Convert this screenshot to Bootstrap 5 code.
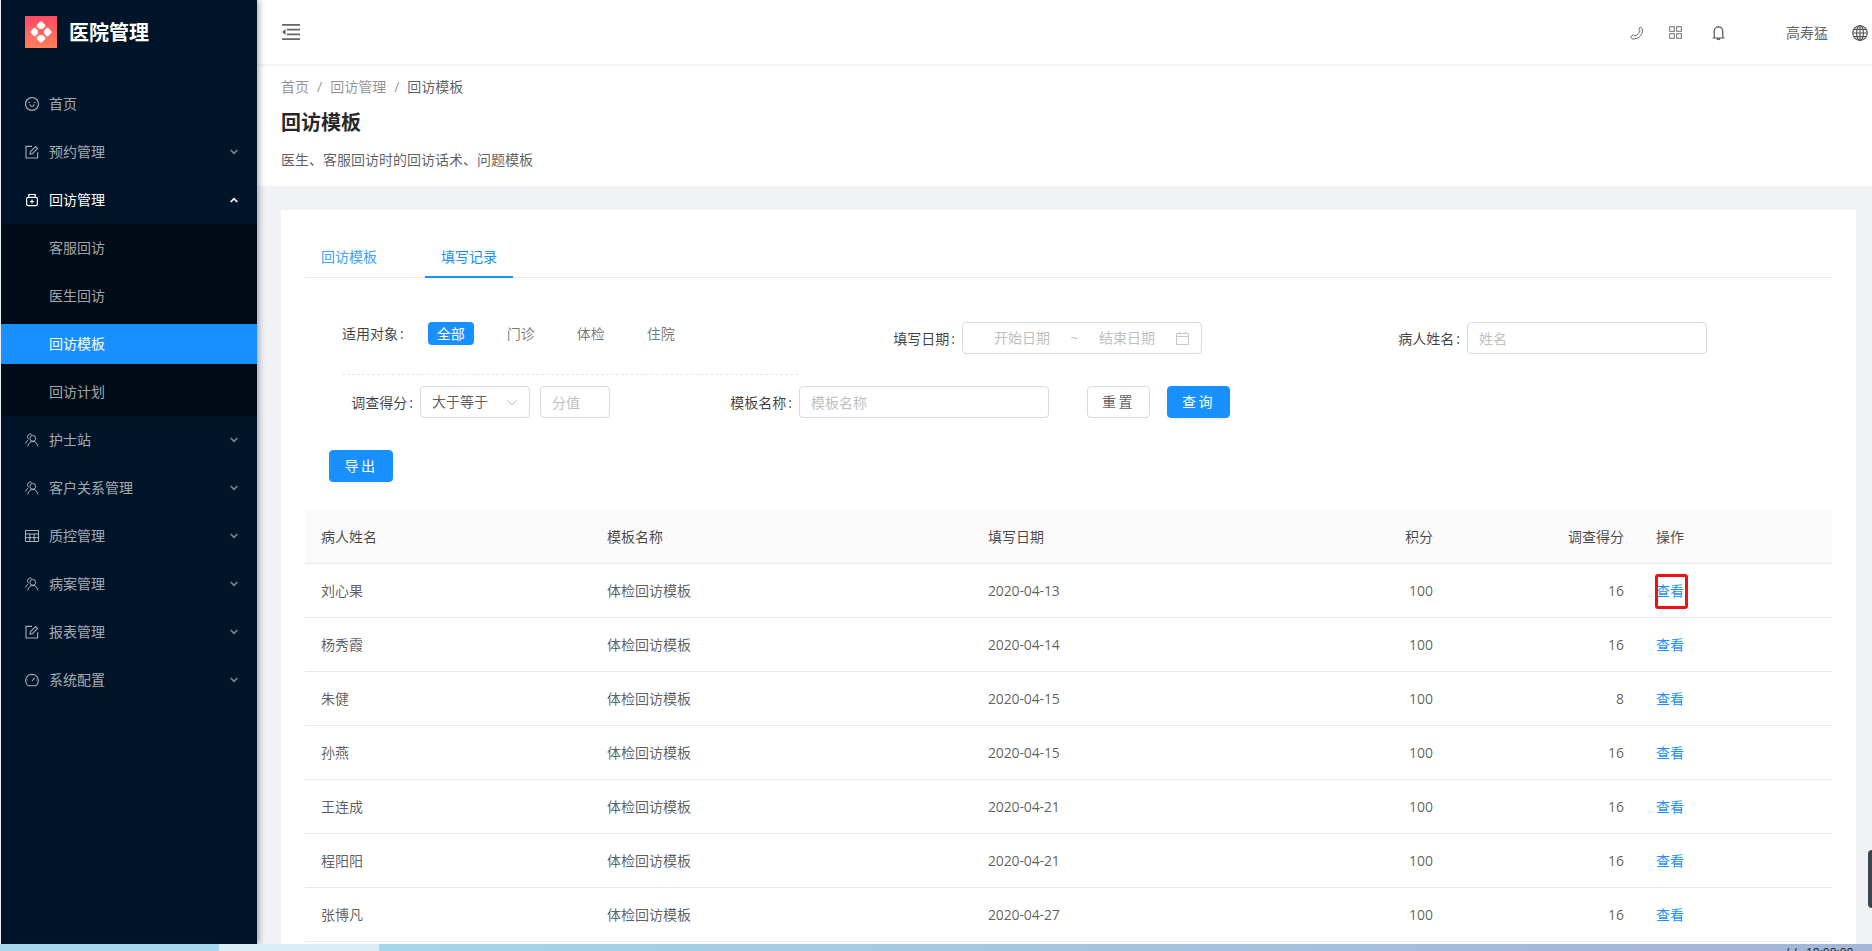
<!DOCTYPE html>
<html lang="zh-CN">
<head>
<meta charset="utf-8">
<title>回访模板</title>
<link href="https://cdn.jsdelivr.net/npm/bootstrap@5.3.0/dist/css/bootstrap.min.css" rel="stylesheet">
<style>
html,body{height:951px;overflow:hidden;}
body{font-family:"Open Sans","Noto Sans CJK SC",sans-serif;font-size:14px;line-height:21px;background:#f0f2f5;color:rgba(0,0,0,.65);position:relative;}
.shell{height:944px;overflow:hidden;}
.side{width:257px;flex:none;background:#001529;border-left:1px solid #eef1f4;box-shadow:2px 0 6px rgba(0,21,41,.35);z-index:3;color:rgba(255,255,255,.65);}
.brand{height:64px;padding-left:24px;gap:12px;margin-bottom:16px;}
.brand-name{font-size:20px;font-weight:600;color:#fff;line-height:28px;padding-top:2px;}
.brand svg{display:block;}
.mitem{height:48px;padding:0 19px 0 24px;color:rgba(255,255,255,.65);}
.mitem .mi{width:14px;height:14px;margin-right:10px;flex:none;}
.mitem .chev{margin-left:auto;}
.mtext{padding-bottom:2px;}
.mitem.open{color:#fff;}
.subm{background:#000c17;}
.sitem{height:40px;margin:4px 0;padding:0 0 2px 48px;color:rgba(255,255,255,.65);}
.sitem.on{background:#1890ff;color:#fff;}
.mainc{min-width:0;}
.topb{height:64px;flex:none;padding:0 4px 0 25px;background:#fff;box-shadow:0 1px 3px rgba(0,21,41,.09);z-index:2;position:relative;}
.ti{color:#666;position:absolute;}
.ti.dk{color:#555;}
.uname{position:absolute;left:1529px;top:22px;color:#666;}
.phead{height:122px;background:#fff;flex:none;margin-top:0;padding:12px 24px 0;}
.crumb{margin:0;line-height:22px;--bs-breadcrumb-margin-bottom:0;--bs-breadcrumb-divider-color:rgba(0,0,0,.45);--bs-breadcrumb-item-active-color:rgba(0,0,0,.65);}
.crumb .breadcrumb-item{color:rgba(0,0,0,.45);}
.crumb .breadcrumb-item.active{color:rgba(0,0,0,.65);}
.ptitle{font-size:20px;font-weight:600;line-height:28px;color:rgba(0,0,0,.85);margin:11px 0 12px;}
.pdesc{line-height:22px;margin:0;color:rgba(0,0,0,.65);}
.pagebody{padding:24px 16px 0 24px;flex:1;min-height:0;}
.panel{background:#fff;padding:24px;height:100%;overflow:hidden;}
.tabsbar{height:44px;border-bottom:1px solid #e8e8e8;gap:32px;}
.tabx{padding:12px 16px 0;width:88px;height:44px;line-height:22px;color:#40a0ff;text-decoration:none;flex:none;}
.tabx.on{color:#1890ff;border-bottom:2px solid #1890ff;}
.frow1{margin-top:44px;padding-left:37px;height:32px;}
.ftype{width:456px;height:24px;line-height:24px;color:rgba(0,0,0,.75);}
.pill{width:46px;height:23px;line-height:23px;text-align:center;border-radius:4px;color:rgba(0,0,0,.55);margin-right:24px;}
.pill.first{margin-left:24px;background:#1890ff;color:#fff;}
.lab{color:rgba(0,0,0,.75);white-space:nowrap;margin-right:7px;}
.colon{margin-left:2px;}
.fld{justify-content:flex-end;}
.w404{width:404px;}
.w505{width:505px;}
.w305{width:305px;}
.w439{width:439px;}
.box{height:32px;border:1px solid #d9d9d9;border-radius:4px;padding:0 11px;font-size:14px;line-height:30px;background:#fff;color:rgba(0,0,0,.65);box-shadow:none;}
.box::placeholder{color:#bfbfbf;}
.holder{color:#bfbfbf;}
.datestart{margin-left:20px;}
.cal{margin-left:21px;margin-right:1px;flex:none;}
.w240{width:240px;}
.w70{width:70px;}
.w250{width:250px;}
.selbox{width:110px;margin-right:10px;}
.dashln{margin:20px 0 11px 37px;width:456px;border-top:1px dashed #e8e8e8;}
.btnpair{margin-left:38px;gap:17px;}
.btnx{height:32px;width:63px;padding:0;font-size:14px;line-height:30px;border-radius:4px;letter-spacing:2.5px;}
.btn-primary.btnx{--bs-btn-bg:#1890ff;--bs-btn-border-color:#1890ff;--bs-btn-color:#fff;box-shadow:0 2px 0 rgba(0,0,0,.045);}
.btn-light.btnx{--bs-btn-bg:#fff;--bs-btn-border-color:#d9d9d9;--bs-btn-color:rgba(0,0,0,.65);}
.btn-exp{width:64px;margin:32px 0 28px 24px;display:block;}
.tb{width:1527px;table-layout:fixed;margin:0;--bs-table-color:rgba(0,0,0,.65);--bs-table-border-color:#e8e8e8;}
.tb th{background:#fafafa;font-weight:400;color:rgba(0,0,0,.72);padding:16px;}
.tb td{padding:16px;}
.tb th:first-child{border-top-left-radius:4px;}
.tb th:last-child{border-top-right-radius:4px;}
.c1{width:286px;}.c2{width:381px;}.c3{width:258px;}.c4{width:219px;}.c5{width:191px;}.c6{width:192px;}
.dt{letter-spacing:-.14px;}
.viewlink{color:#1890ff;text-decoration:none;}
.redmark{position:absolute;left:-1px;right:-4px;top:-6px;bottom:-8px;border:3px solid #f01212;border-radius:3px;}
.strip{height:7px;overflow:hidden;position:relative;}
.st1{width:219px;background:#a6d9ed;}
.st2{width:160px;background:#d9eef7;}
.st3{background:linear-gradient(90deg,#a3d7ea,#a4b7d9 85%);}
.clock{position:absolute;left:1785px;top:-1px;font-size:12px;line-height:20px;color:#222;white-space:nowrap;}
.clock b{font-weight:400;margin-left:9px;}
.edgehandle{position:absolute;right:0;top:850px;width:4px;height:58px;background:#3c4450;border-radius:4px 0 0 4px;z-index:4;}
.p1{left:1373px;top:26px;}.p2{left:1412px;top:26px;}.p3{left:1455px;top:25px;}.p4{left:1595px;top:25px;}
</style>
</head>
<body>
<div class="d-flex shell">
  <aside class="side d-flex flex-column">
    <div class="brand d-flex align-items-center">
      <svg width="32" height="32" viewBox="0 0 32 32"><defs><linearGradient id="lg" x1="0" y1="0" x2="0" y2="1"><stop offset="0" stop-color="#ff4a64"/><stop offset="1" stop-color="#ff7f5c"/></linearGradient></defs><rect width="32" height="32" fill="url(#lg)"/><g fill="#fff" stroke="#fff" stroke-width=".8" stroke-linejoin="round"><path d="M16 5.5 19.8 8.8V10.4L18 12.4H14L12.2 10.4V8.8Z"/><path d="M16 5.5 19.8 8.8V10.4L18 12.4H14L12.2 10.4V8.8Z" transform="rotate(90 16 16)"/><path d="M16 5.5 19.8 8.8V10.4L18 12.4H14L12.2 10.4V8.8Z" transform="rotate(180 16 16)"/><path d="M16 5.5 19.8 8.8V10.4L18 12.4H14L12.2 10.4V8.8Z" transform="rotate(270 16 16)"/></g></svg>
      <span class="brand-name">医院管理</span>
    </div>
    <nav class="d-flex flex-column">
      <div class="mitem d-flex align-items-center"><svg class="mi" viewBox="64 64 896 896" fill="currentColor"><path d="M288 421a48 48 0 1 0 96 0 48 48 0 1 0-96 0zm352 0a48 48 0 1 0 96 0 48 48 0 1 0-96 0zM512 64C264.6 64 64 264.6 64 512s200.6 448 448 448 448-200.6 448-448S759.4 64 512 64zm263 711c-34.2 34.2-74 61-118.3 79.8C611 874.2 562.3 884 512 884c-50.3 0-99-9.8-144.8-29.2A370.4 370.4 0 0 1 248.9 775c-34.2-34.2-61-74-79.8-118.3C149.8 611 140 562.3 140 512s9.8-99 29.2-144.8A370.4 370.4 0 0 1 249 248.9c34.2-34.2 74-61 118.3-79.8C413 149.8 461.7 140 512 140c50.3 0 99 9.8 144.8 29.2A370.4 370.4 0 0 1 775.1 249c34.2 34.2 61 74 79.8 118.3C874.2 413 884 461.7 884 512s-9.8 99-29.2 144.8A368.89 368.89 0 0 1 775 775zM664 533h-48.1c-4.2 0-7.8 3.2-8.1 7.4C604 589.9 562.5 629 512 629s-92.1-39.1-95.8-88.6c-.3-4.2-3.9-7.4-8.1-7.4H360a8 8 0 0 0-8 8.4c4.4 84.3 74.5 151.6 160 151.6s155.6-67.3 160-151.6a8 8 0 0 0-8-8.4z"/></svg><span class="mtext">首页</span></div>
      <div class="mitem d-flex align-items-center"><svg class="mi" viewBox="0 0 14 14" fill="none" stroke="currentColor" stroke-width="1.1"><path d="M12.6 7.2V13H1V1.4H7"/><path d="M5 9.1 5.5 6.6 10.6 1.5 12.6 3.4 7.5 8.6Z"/></svg><span class="mtext">预约管理</span><svg class="chev" width="8" height="6" viewBox="0 0 8 6" fill="none" stroke="currentColor" stroke-width="1.7" opacity=".75"><path d="M.7 1 4 4.4 7.3 1"/></svg></div>
      <div class="mitem open d-flex align-items-center"><svg class="mi" viewBox="0 0 14 14" fill="none" stroke="currentColor" stroke-width="1.2"><rect x="1.6" y="4.4" width="10.8" height="8.2" rx="1.6"/><path d="M3.8 4.4V1.5H10.2V4.4"/><path d="M7 6.5V10.5M5 8.5H9"/></svg><span class="mtext">回访管理</span><svg class="chev" width="8" height="6" viewBox="0 0 8 6" fill="none" stroke="currentColor" stroke-width="1.7"><path d="M.7 5 4 1.6 7.3 5"/></svg></div>
      <div class="subm d-flex flex-column">
        <div class="sitem d-flex align-items-center">客服回访</div>
        <div class="sitem d-flex align-items-center">医生回访</div>
        <div class="sitem on d-flex align-items-center">回访模板</div>
        <div class="sitem d-flex align-items-center">回访计划</div>
      </div>
      <div class="mitem d-flex align-items-center"><svg class="mi" viewBox="0 0 14 14" fill="none" stroke="currentColor" stroke-width="1"><circle cx="7.8" cy="5.4" r="2.9"/><path d="M2.8 13.3C3.3 10.2 5.3 8.4 7.8 8.4s4.5 1.8 5 4.9"/><path d="M6.6 1.3A3 3 0 0 0 3 5.8M3.4 6.8C2 7.6 1 9 .7 10.6"/></svg><span class="mtext">护士站</span><svg class="chev" width="8" height="6" viewBox="0 0 8 6" fill="none" stroke="currentColor" stroke-width="1.7" opacity=".75"><path d="M.7 1 4 4.4 7.3 1"/></svg></div>
      <div class="mitem d-flex align-items-center"><svg class="mi" viewBox="0 0 14 14" fill="none" stroke="currentColor" stroke-width="1"><circle cx="7.8" cy="5.4" r="2.9"/><path d="M2.8 13.3C3.3 10.2 5.3 8.4 7.8 8.4s4.5 1.8 5 4.9"/><path d="M6.6 1.3A3 3 0 0 0 3 5.8M3.4 6.8C2 7.6 1 9 .7 10.6"/></svg><span class="mtext">客户关系管理</span><svg class="chev" width="8" height="6" viewBox="0 0 8 6" fill="none" stroke="currentColor" stroke-width="1.7" opacity=".75"><path d="M.7 1 4 4.4 7.3 1"/></svg></div>
      <div class="mitem d-flex align-items-center"><svg class="mi" viewBox="0 0 14 14" fill="none" stroke="currentColor" stroke-width="1"><path d="M.5 1.5H13.5V12.5H.5ZM.5 5H13.5M.5 8.7H13.5M4.8 5V12.5M9.2 5V12.5"/></svg><span class="mtext">质控管理</span><svg class="chev" width="8" height="6" viewBox="0 0 8 6" fill="none" stroke="currentColor" stroke-width="1.7" opacity=".75"><path d="M.7 1 4 4.4 7.3 1"/></svg></div>
      <div class="mitem d-flex align-items-center"><svg class="mi" viewBox="0 0 14 14" fill="none" stroke="currentColor" stroke-width="1"><circle cx="7.8" cy="5.4" r="2.9"/><path d="M2.8 13.3C3.3 10.2 5.3 8.4 7.8 8.4s4.5 1.8 5 4.9"/><path d="M6.6 1.3A3 3 0 0 0 3 5.8M3.4 6.8C2 7.6 1 9 .7 10.6"/></svg><span class="mtext">病案管理</span><svg class="chev" width="8" height="6" viewBox="0 0 8 6" fill="none" stroke="currentColor" stroke-width="1.7" opacity=".75"><path d="M.7 1 4 4.4 7.3 1"/></svg></div>
      <div class="mitem d-flex align-items-center"><svg class="mi" viewBox="0 0 14 14" fill="none" stroke="currentColor" stroke-width="1.1"><path d="M12.6 7.2V13H1V1.4H7"/><path d="M5 9.1 5.5 6.6 10.6 1.5 12.6 3.4 7.5 8.6Z"/></svg><span class="mtext">报表管理</span><svg class="chev" width="8" height="6" viewBox="0 0 8 6" fill="none" stroke="currentColor" stroke-width="1.7" opacity=".75"><path d="M.7 1 4 4.4 7.3 1"/></svg></div>
      <div class="mitem d-flex align-items-center"><svg class="mi" viewBox="0 0 14 14" fill="none" stroke="currentColor" stroke-width="1.1"><path d="M3.2 12.8A6.4 6.4 0 1 1 10.8 12.8Z"/><path d="M7 8 9.6 4.8M2.8 7H1.8M12.2 7H11.2M7 2.6V1.6"/></svg><span class="mtext">系统配置</span><svg class="chev" width="8" height="6" viewBox="0 0 8 6" fill="none" stroke="currentColor" stroke-width="1.7" opacity=".75"><path d="M.7 1 4 4.4 7.3 1"/></svg></div>
    </nav>
  </aside>
  <main class="mainc flex-grow-1 d-flex flex-column">
    <header class="topb d-flex align-items-center">
      <svg width="18" height="16" viewBox="0 0 18 16" fill="#666"><path d="M0 0H18V1.8H0ZM0 14.2H18V16H0ZM5 4.8H18V6.5H5ZM5 9.5H18V11.2H5ZM0 8 3.6 5V11Z"/></svg>
      <svg class="ti p1" width="14" height="14" viewBox="0 0 14 14" fill="none" stroke="currentColor" stroke-width="1"><path d="M10.2 1 12.6 3C13 9 8.8 13.2 2.6 13 1.2 12.6.7 11 1.2 10.2L3.5 8.7 5 10C7.5 9 9.3 7 10 4.8L8.8 3.4Z"/></svg>
      <svg class="ti p2" width="13" height="13" viewBox="0 0 13 13" fill="none" stroke="#888" stroke-width="1.2"><rect x=".6" y=".6" width="4.8" height="4.8" rx=".4"/><rect x="7.6" y=".6" width="4.8" height="4.8" rx=".4"/><rect x=".6" y="7.6" width="4.8" height="4.8" rx=".4"/><rect x="7.6" y="7.6" width="4.8" height="4.8" rx=".4"/></svg>
      <svg class="ti dk p3" width="13" height="16" viewBox="0 0 13 16" fill="none" stroke="currentColor" stroke-width="1.2"><path d="M.6 13H12.4M2.2 13V6.2A4.3 4.3 0 0 1 10.8 6.2V13M6.5 1V2M5 13.5A1.6 1.6 0 0 0 8 13.5"/></svg>
      <span class="uname">高寿猛</span>
      <svg class="ti dk p4" width="16" height="16" viewBox="0 0 16 16" fill="none" stroke="currentColor" stroke-width="1.15"><circle cx="8" cy="8" r="7.3"/><ellipse cx="8" cy="8" rx="3.4" ry="7.3"/><path d="M8 .6V15.4M.6 8H15.4M1.6 4.4H14.4M1.6 11.6H14.4"/></svg>
    </header>
    <section class="phead">
      <ol class="breadcrumb crumb"><li class="breadcrumb-item">首页</li><li class="breadcrumb-item">回访管理</li><li class="breadcrumb-item active">回访模板</li></ol>
      <h1 class="ptitle">回访模板</h1>
      <p class="pdesc">医生、客服回访时的回访话术、问题模板</p>
    </section>
    <section class="pagebody">
      <div class="panel">
        <div class="tabsbar d-flex"><a class="tabx" href="#">回访模板</a><a class="tabx on" href="#">填写记录</a></div>

        <div class="frow1 d-flex">
          <div class="ftype d-flex"><span>适用对象<span class="colon">:</span></span><span class="pill first">全部</span><span class="pill">门诊</span><span class="pill">体检</span><span class="pill">住院</span></div>
          <div class="fld w404 d-flex align-items-center">
            <span class="lab">填写日期<span class="colon">:</span></span>
            <div class="box holder w240 d-flex align-items-center">
              <span class="datestart">开始日期</span><span class="mx-auto">~</span><span>结束日期</span>
              <svg class="cal" width="13" height="14" viewBox="0 0 13 14" fill="none" stroke="#c8c8c8" stroke-width="1"><path d="M.5 2.5H12.5V13.5H.5ZM.5 5.5H12.5M3.5 1V3M9.5 1V3"/></svg>
            </div>
          </div>
          <div class="fld w505 d-flex align-items-center">
            <span class="lab">病人姓名<span class="colon">:</span></span>
            <input class="box form-control w240" placeholder="姓名">
          </div>
        </div>
        <div class="dashln"></div>
        <div class="d-flex">
          <div class="fld w305 d-flex align-items-center">
            <span class="lab">调查得分<span class="colon">:</span></span>
            <div class="box selbox d-flex align-items-center justify-content-between"><span>大于等于</span><svg width="12" height="7" viewBox="0 0 12 7" fill="none" stroke="#bfbfbf" stroke-width="1"><path d="M1 1 6 6 11 1"/></svg></div>
            <input class="box form-control w70" placeholder="分值">
          </div>
          <div class="fld w439 d-flex align-items-center">
            <span class="lab">模板名称<span class="colon">:</span></span>
            <input class="box form-control w250" placeholder="模板名称">
          </div>
          <div class="btnpair d-flex">
            <button class="btn btn-light btnx" type="button">重置</button>
            <button class="btn btn-primary btnx" type="button">查询</button>
          </div>
        </div>
        <button class="btn btn-primary btnx btn-exp" type="button">导出</button>

        <table class="table tb">
          <colgroup><col class="c1"><col class="c2"><col class="c3"><col class="c4"><col class="c5"><col class="c6"></colgroup>
          <thead><tr><th>病人姓名</th><th>模板名称</th><th>填写日期</th><th class="text-end">积分</th><th class="text-end">调查得分</th><th>操作</th></tr></thead>
          <tbody>
            <tr><td>刘心果</td><td>体检回访模板</td><td class="dt">2020-04-13</td><td class="text-end">100</td><td class="text-end">16</td><td><span class="d-inline-block position-relative"><a class="viewlink" href="#">查看</a><span class="redmark"></span></span></td></tr>
            <tr><td>杨秀霞</td><td>体检回访模板</td><td class="dt">2020-04-14</td><td class="text-end">100</td><td class="text-end">16</td><td><a class="viewlink" href="#">查看</a></td></tr>
            <tr><td>朱健</td><td>体检回访模板</td><td class="dt">2020-04-15</td><td class="text-end">100</td><td class="text-end">8</td><td><a class="viewlink" href="#">查看</a></td></tr>
            <tr><td>孙燕</td><td>体检回访模板</td><td class="dt">2020-04-15</td><td class="text-end">100</td><td class="text-end">16</td><td><a class="viewlink" href="#">查看</a></td></tr>
            <tr><td>王连成</td><td>体检回访模板</td><td class="dt">2020-04-21</td><td class="text-end">100</td><td class="text-end">16</td><td><a class="viewlink" href="#">查看</a></td></tr>
            <tr><td>程阳阳</td><td>体检回访模板</td><td class="dt">2020-04-21</td><td class="text-end">100</td><td class="text-end">16</td><td><a class="viewlink" href="#">查看</a></td></tr>
            <tr><td>张博凡</td><td>体检回访模板</td><td class="dt">2020-04-27</td><td class="text-end">100</td><td class="text-end">16</td><td><a class="viewlink" href="#">查看</a></td></tr>
          </tbody>
        </table>
      </div>
    </section>
  </main>
</div>
<div class="strip d-flex"><div class="st1"></div><div class="st2"></div><div class="st3 flex-grow-1"></div><span class="clock">/ /<b>18:08:08</b></span></div>
<div class="edgehandle"></div>
<script src="https://cdn.jsdelivr.net/npm/bootstrap@5.3.0/dist/js/bootstrap.bundle.min.js"></script>
</body>
</html>
